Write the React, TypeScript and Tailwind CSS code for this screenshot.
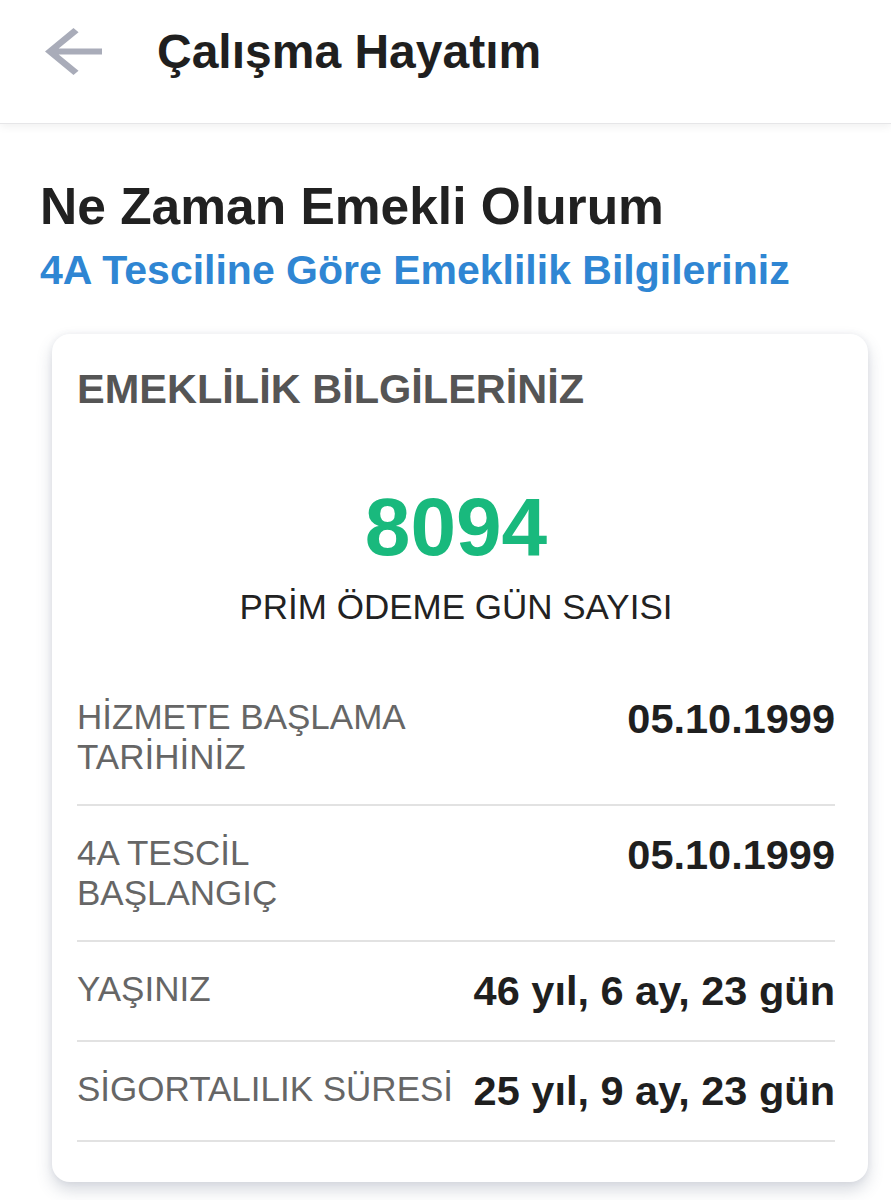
import React from 'react'

const rows = [
  { label: ['HİZMETE BAŞLAMA', 'TARİHİNİZ'], value: '05.10.1999' },
  { label: ['4A TESCİL', 'BAŞLANGIÇ'], value: '05.10.1999' },
  { label: ['YAŞINIZ'], value: '46 yıl, 6 ay, 23 gün' },
  { label: ['SİGORTALILIK SÜRESİ'], value: '25 yıl, 9 ay, 23 gün' },
]

function BackArrow() {
  return (
    <svg width="57" height="47" viewBox="4 4 16 16" preserveAspectRatio="none" className="text-[#a9acb9]">
      <path fill="currentColor" d="M20 11H7.83l5.59-5.59L12 4l-8 8 8 8 1.41-1.41L7.83 13H20v-2z" />
    </svg>
  )
}

export default function App() {
  return (
    <div className="w-[891px] h-[1200px] overflow-hidden bg-white" style={{ fontFamily: '"Liberation Sans", Arial, sans-serif' }}>
      <header className="h-[124px] flex items-center pb-[20px] bg-white border-b border-[#e6e6e8] shadow-[0_3px_8px_rgba(0,0,0,0.06)]">
        <div className="ml-[45px]">
          <BackArrow />
        </div>
        <h1 className="ml-[55px] text-[48px] leading-[56px] font-bold text-[#1f1f1f]">Çalışma Hayatım</h1>
      </header>

      <div className="pl-[40px] pt-[52px]">
        <h2 className="text-[51.5px] leading-[60px] font-bold text-[#212121]">Ne Zaman Emekli Olurum</h2>
        <p className="mt-[12px] text-[41px] leading-[44px] font-bold text-[#2f86d3]">4A Tesciline Göre Emeklilik Bilgileriniz</p>
      </div>

      <div className="ml-[52px] mt-[42px] w-[816px] rounded-[18px] bg-white pl-[25px] pr-[33px] pt-[33px] pb-[40px] shadow-[0_8px_16px_rgba(70,80,110,0.22),0_0_6px_rgba(70,80,110,0.08)]">
        <h3 className="text-[41.5px] leading-[44px] font-bold text-[#555555]">EMEKLİLİK BİLGİLERİNİZ</h3>

        <div className="mt-[71px] text-center text-[82px] leading-[90px] font-bold text-[#19b97d]">8094</div>
        <div className="mt-[15px] text-center text-[35px] leading-[40px] text-[#222222]">PRİM ÖDEME GÜN SAYISI</div>

        <div className="mt-[43px]">
          {rows.map((row, i) => (
            <div key={i} className="flex justify-between py-[27px] border-b-2 border-[#e2e2e2]">
              <div className="text-[35px] leading-[40px] text-[#666666]">
                {row.label.map((l, j) => (
                  <div key={j}>{l}</div>
                ))}
              </div>
              <div className="text-[41.5px] leading-[44px] font-bold text-[#1f1f1f] whitespace-nowrap">{row.value}</div>
            </div>
          ))}
        </div>
      </div>
    </div>
  )
}
